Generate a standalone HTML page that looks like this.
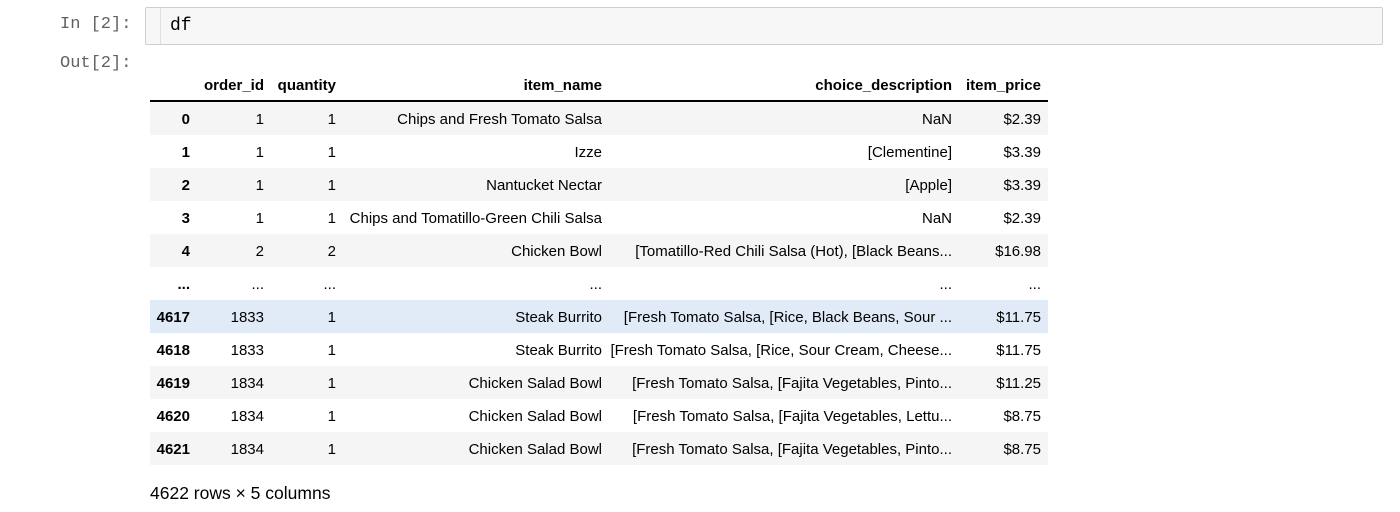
<!DOCTYPE html>
<html><head><style>
body{margin:0;width:1400px;height:512px;background:#fff;position:relative;overflow:hidden;font-family:"Liberation Sans",Arial,sans-serif;}
.lbl{position:absolute;font-family:"Liberation Mono","DejaVu Sans Mono",monospace;font-size:17px;color:#616161;}
.inbox{position:absolute;left:145px;top:7px;width:1236px;height:36px;border:1px solid #cfcfcf;border-radius:2px;background:#f7f7f7;}
.gut{position:absolute;left:0;top:0;width:14px;height:36px;border-right:1px solid #e0e0e0;background:#f7f7f7}
.code{position:absolute;left:24px;top:8px;font-family:"Liberation Mono","DejaVu Sans Mono",monospace;font-size:18px;color:#000}
.row{position:absolute;left:150px;width:898px;height:33px;}
.g{background:#f5f5f5}.h{background:#e1ebf8}
.c{position:absolute;top:9px;font-size:15px;color:#000;white-space:nowrap;text-align:right}
.b{font-weight:bold}
</style></head><body>
<div class="lbl" style="left:60px;top:15px;">In [2]:</div>
<div class="lbl" style="left:60px;top:54px;">Out[2]:</div>
<div class="inbox"><div class="gut"></div><div class="code">df</div></div>
<div style="position:absolute;left:150px;top:100px;width:898px;height:2px;background:#000"></div>
<div class="row" style="top:68px">
<span class="c b" style="right:784px">order_id</span>
<span class="c b" style="right:712px">quantity</span>
<span class="c b" style="right:446px">item_name</span>
<span class="c b" style="right:96px">choice_description</span>
<span class="c b" style="right:7px">item_price</span>
</div>
<div id="rows"></div>
<div style="position:absolute;left:150px;top:483px;font-size:17.5px;">4622 rows × 5 columns</div>
<script>
var d=[["0","1","1","Chips and Fresh Tomato Salsa","NaN","$2.39","g"],
["1","1","1","Izze","[Clementine]","$3.39",""],
["2","1","1","Nantucket Nectar","[Apple]","$3.39","g"],
["3","1","1","Chips and Tomatillo-Green Chili Salsa","NaN","$2.39",""],
["4","2","2","Chicken Bowl","[Tomatillo-Red Chili Salsa (Hot), [Black Beans...","$16.98","g"],
["...","...","...","...","...","...",""],
["4617","1833","1","Steak Burrito","[Fresh Tomato Salsa, [Rice, Black Beans, Sour ...","$11.75","h"],
["4618","1833","1","Steak Burrito","[Fresh Tomato Salsa, [Rice, Sour Cream, Cheese...","$11.75",""],
["4619","1834","1","Chicken Salad Bowl","[Fresh Tomato Salsa, [Fajita Vegetables, Pinto...","$11.25","g"],
["4620","1834","1","Chicken Salad Bowl","[Fresh Tomato Salsa, [Fajita Vegetables, Lettu...","$8.75",""],
["4621","1834","1","Chicken Salad Bowl","[Fresh Tomato Salsa, [Fajita Vegetables, Pinto...","$8.75","g"]];
var r=[858,784,712,446,96,7],h="";
d.forEach(function(x,i){h+='<div class="row '+x[6]+'" style="top:'+(102+i*33)+'px">';
for(var j=0;j<6;j++)h+='<span class="c'+(j==0?' b':'')+'" style="right:'+r[j]+'px">'+x[j]+'</span>';
h+='</div>';});
document.getElementById('rows').innerHTML=h;
</script>
</body></html>
